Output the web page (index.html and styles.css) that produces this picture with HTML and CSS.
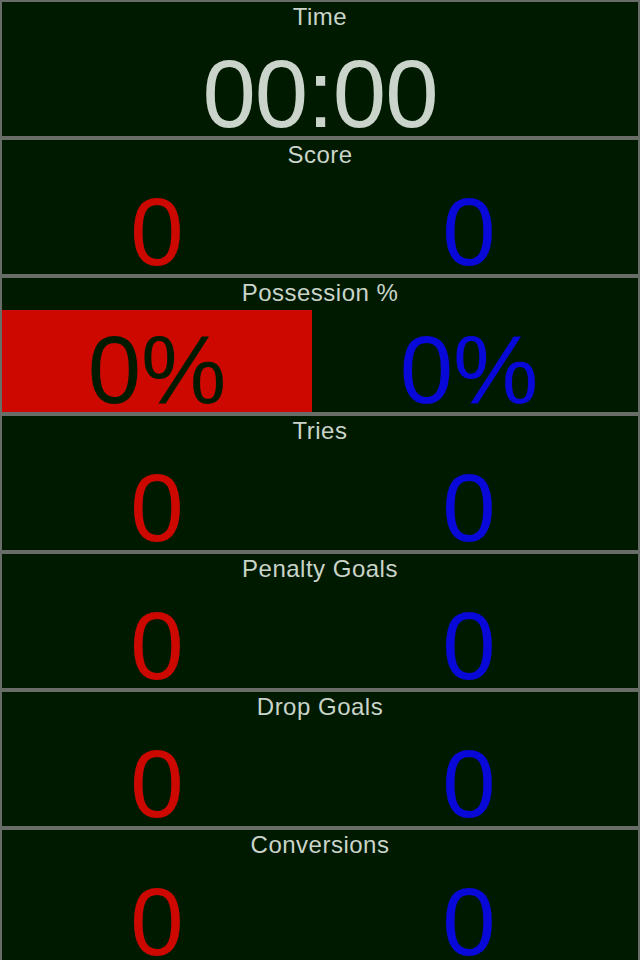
FILE: index.html
```html
<!DOCTYPE html>
<html lang="en">
<head>
    <meta charset="UTF-8">
    <meta name="viewport" content="width=device-width, initial-scale=1.0">
    <title>Rugby Stats</title>
    <link rel="stylesheet" href="styles.css">
</head>
<body>
    <div class="stats">
        <div class="stat-row">
            <div class="stat-title">Time</div>
            <div class="stat-value time">00:00</div>
        </div>

        <div class="stat-row">
            <div class="stat-title">Score</div>
            <div class="stat-pair">
                <div class="stat-value home">0</div>
                <div class="stat-value away">0</div>
            </div>
        </div>

        <div class="stat-row">
            <div class="stat-title">Possession %</div>
            <div class="stat-pair">
                <div class="stat-value home active">0%</div>
                <div class="stat-value away">0%</div>
            </div>
        </div>

        <div class="stat-row">
            <div class="stat-title">Tries</div>
            <div class="stat-pair">
                <div class="stat-value home">0</div>
                <div class="stat-value away">0</div>
            </div>
        </div>

        <div class="stat-row">
            <div class="stat-title">Penalty Goals</div>
            <div class="stat-pair">
                <div class="stat-value home">0</div>
                <div class="stat-value away">0</div>
            </div>
        </div>

        <div class="stat-row">
            <div class="stat-title">Drop Goals</div>
            <div class="stat-pair">
                <div class="stat-value home">0</div>
                <div class="stat-value away">0</div>
            </div>
        </div>

        <div class="stat-row">
            <div class="stat-title">Conversions</div>
            <div class="stat-pair">
                <div class="stat-value home">0</div>
                <div class="stat-value away">0</div>
            </div>
        </div>
    </div>
</body>
</html>
```

FILE: styles.css
```css
body {
    margin: 0;
    background: #001a00;
    font-family: 'Liberation Sans', Arial, sans-serif;
    overflow: hidden;
}
.stats {
    width: 640px;
}
.stat-row {
    height: 134px;
    border: 2px solid #686d68;
    background: #001a00;
}
.stat-title {
    height: 32px;
    line-height: 30px;
    text-align: center;
    font-size: 24px;
    letter-spacing: 0.5px;
    color: #cad4ca;
}
.stat-pair {
    display: grid;
    grid-template-columns: 310px 310px;
    column-gap: 2px;
}
.stat-value {
    height: 84px;
    padding-top: 18px;
    line-height: 84px;
    text-align: center;
    font-size: 96px;
    white-space: nowrap;
}
.time {
    color: #cad4ca;
    letter-spacing: -1px;
}
.home {
    color: #cc0800;
}
.away {
    color: #0808d8;
}
.home.active {
    background: #cc0800;
    color: #001a00;
}
```
